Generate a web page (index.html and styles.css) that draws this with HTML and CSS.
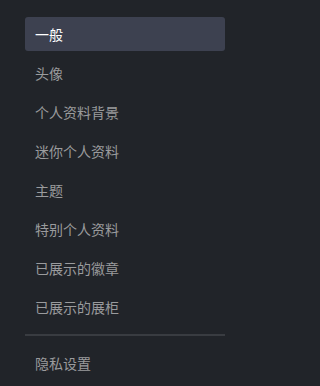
FILE: index.html
```html
<!DOCTYPE html>
<html lang="zh-CN">
<head>
<meta charset="utf-8">
<meta name="viewport" content="width=device-width, initial-scale=1">
<link rel="stylesheet" href="styles.css">
</head>
<body>
<nav class="sidebar">
  <ul class="menu">
    <li class="item active">一般</li>
    <li class="item">头像</li>
    <li class="item">个人资料背景</li>
    <li class="item">迷你个人资料</li>
    <li class="item">主题</li>
    <li class="item">特别个人资料</li>
    <li class="item">已展示的徽章</li>
    <li class="item">已展示的展柜</li>
  </ul>
  <div class="divider"></div>
  <ul class="menu">
    <li class="item">隐私设置</li>
  </ul>
</nav>
</body>
</html>
```
FILE: styles.css
```css
html, body {
  margin: 0;
  padding: 0;
  height: 100%;
  background: #212429;
}
body {
  font-family: "Noto Sans CJK SC", "Noto Sans", sans-serif;
  font-size: 14px;
  color: #9a9b9d;
}
.sidebar {
  width: 200px;
  padding: 17px 0 0 25px;
}
.menu {
  list-style: none;
  margin: 0;
  padding: 0;
  display: flex;
  flex-direction: column;
  gap: 5px;
}
.item {
  height: 34px;
  line-height: 34px;
  padding-left: 10px;
  border-radius: 3px;
  white-space: nowrap;
}
.item.active {
  background: #3d4150;
  color: #ffffff;
}
.divider {
  height: 2px;
  background: #393c41;
  margin: 10px 0;
}
```
